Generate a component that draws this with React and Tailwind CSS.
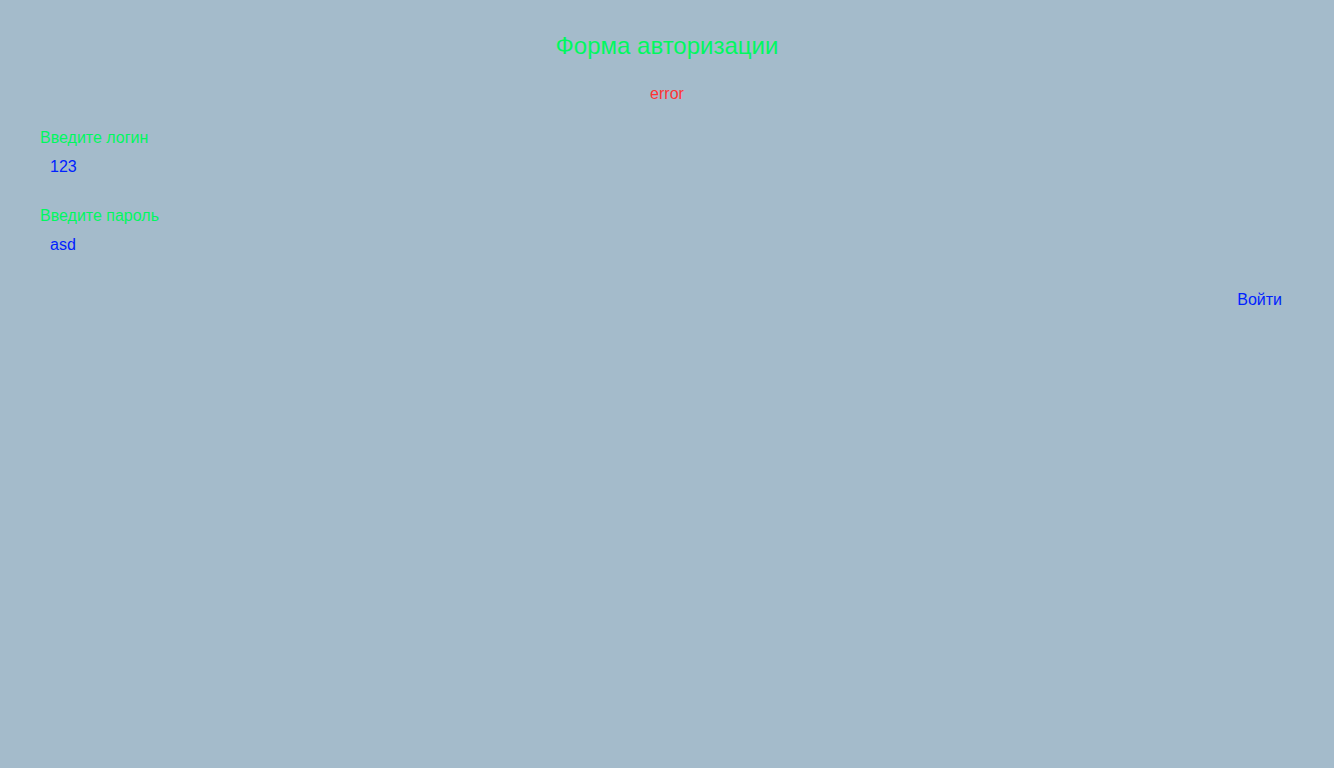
import React from 'react';

export default function App() {
  return (
    <div className="min-h-screen bg-[#a4bbcb] px-10 pt-[30px] font-['Liberation_Sans',Arial,sans-serif]">
      <h1 className="text-center text-2xl leading-8 text-[#00f860]">Форма авторизации</h1>
      <div className="mt-5 text-center text-base leading-6 text-[#ff3333]">error</div>

      <form className="mt-5 flex flex-col" onSubmit={(e) => e.preventDefault()}>
        <label className="text-base leading-6 text-[#00f860]">Введите логин</label>
        <input
          defaultValue="123"
          className="mt-[5px] h-6 w-64 bg-transparent px-[10px] text-base leading-6 text-[#0022ff] outline-none"
        />

        <label className="mt-[25px] text-base leading-6 text-[#00f860]">Введите пароль</label>
        <input
          defaultValue="asd"
          className="mt-[5px] h-6 w-64 bg-transparent px-[10px] text-base leading-6 text-[#0022ff] outline-none"
        />

        <div className="mt-[31px] flex justify-end pr-3">
          <button type="submit" className="text-base leading-6 text-[#0022ff]">Войти</button>
        </div>
      </form>
    </div>
  );
}
